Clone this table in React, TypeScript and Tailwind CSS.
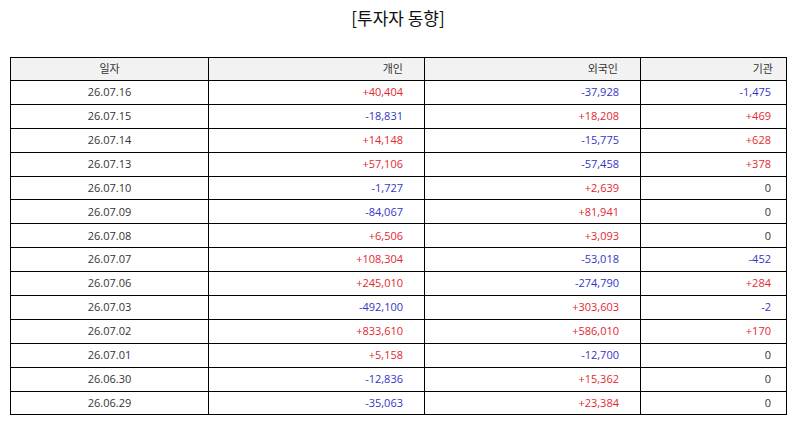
import React from "react";

const rows: [string, string, string, string][] = [
  ["26.07.16", "+40,404", "-37,928", "-1,475"],
  ["26.07.15", "-18,831", "+18,208", "+469"],
  ["26.07.14", "+14,148", "-15,775", "+628"],
  ["26.07.13", "+57,106", "-57,458", "+378"],
  ["26.07.10", "-1,727", "+2,639", "0"],
  ["26.07.09", "-84,067", "+81,941", "0"],
  ["26.07.08", "+6,506", "+3,093", "0"],
  ["26.07.07", "+108,304", "-53,018", "-452"],
  ["26.07.06", "+245,010", "-274,790", "+284"],
  ["26.07.03", "-492,100", "+303,603", "-2"],
  ["26.07.02", "+833,610", "+586,010", "+170"],
  ["26.07.01", "+5,158", "-12,700", "0"],
  ["26.06.30", "-12,836", "+15,362", "0"],
  ["26.06.29", "-35,063", "+23,384", "0"],
];

function color(v: string) {
  if (v.startsWith("+")) return "text-[#e3282f]";
  if (v.startsWith("-")) return "text-[#3434c8]";
  return "text-[#333333]";
}

export default function App() {
  return (
    <div
      className="w-[794px] h-[425px] bg-white text-[#333333]"
      style={{ fontFamily: '"Open Sans", "Noto Sans CJK KR", sans-serif' }}
    >
      <div className="pt-[5px] h-[57px]">
        <h1
          className="text-center text-[17px] leading-[26px] text-[#111111] font-normal pl-[2px]"
          style={{ fontFamily: '"Noto Sans CJK KR", sans-serif' }}
        >
          [투자자 동향]
        </h1>
      </div>
      <table className="ml-[10px] w-[776px] border-collapse border border-black text-[11px] table-fixed">
        <colgroup>
          <col className="w-[198px]" />
          <col className="w-[216px]" />
          <col className="w-[216px]" />
          <col className="w-[146px]" />
        </colgroup>
        <thead>
          <tr className="h-[23px] bg-[#f2f2f2]">
            <th className="border border-black font-normal text-center p-0">일자</th>
            <th className="border border-black font-normal text-right p-0 pr-[21px]">개인</th>
            <th className="border border-black font-normal text-right p-0 pr-[22px]">외국인</th>
            <th className="border border-black font-normal text-right p-0 pr-[13px]">기관</th>
          </tr>
        </thead>
        <tbody>
          {rows.map((r) => (
            <tr key={r[0]} className="h-[23.9px]">
              <td className="border border-black text-center p-0">{r[0]}</td>
              <td className={"border border-black text-right p-0 pr-[21px] " + color(r[1])}>{r[1]}</td>
              <td className={"border border-black text-right p-0 pr-[21px] " + color(r[2])}>{r[2]}</td>
              <td className={"border border-black text-right p-0 pr-[15px] " + color(r[3])}>{r[3]}</td>
            </tr>
          ))}
        </tbody>
      </table>
    </div>
  );
}
